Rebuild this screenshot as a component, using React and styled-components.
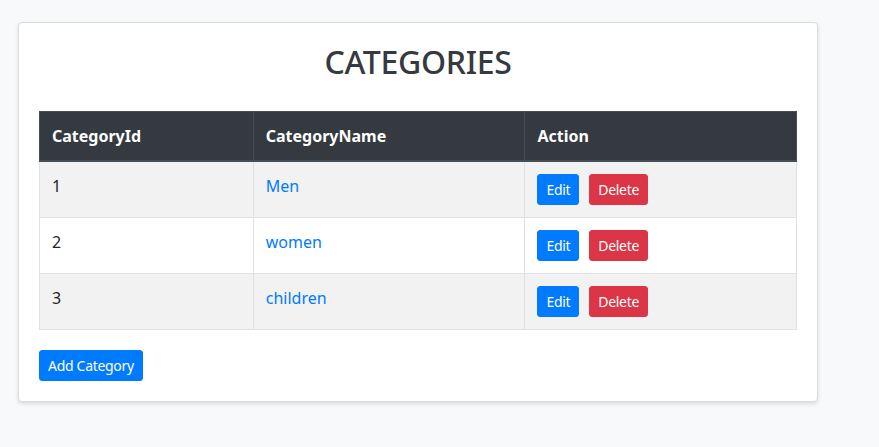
import styled, { createGlobalStyle } from "styled-components";

const GlobalStyle = createGlobalStyle`
  html, body {
    margin: 0;
    padding: 0;
    background-color: #f8f9fa;
    font-family: "Segoe UI", "Noto Sans", "Open Sans", sans-serif;
    color: #212529;
    font-size: 16px;
    line-height: 1.5;
  }
  * { box-sizing: border-box; }
`;

const Page = styled.div`
  min-height: 447px;
  padding: 22px 18px;
`;

const Card = styled.div`
  width: 800px;
  background-color: #fff;
  border: 1px solid #d9dde2;
  border-radius: 4px;
  box-shadow: 0 2px 4px rgba(0, 0, 0, 0.12);
  padding: 20px;
`;

const Title = styled.h2`
  margin: 0 0 30px;
  text-align: center;
  font-size: 32px;
  font-weight: 500;
  letter-spacing: -0.3px;
  line-height: 1.2;
  color: #343a40;
`;

const Table = styled.table`
  width: 100%;
  border-collapse: collapse;
`;

const HeadCell = styled.th`
  text-align: left;
  padding: 12px;
  font-weight: 700;
  color: #fff;
  background-color: #343a40;
  border: 1px solid #454d55;
  border-bottom-width: 2px;
  width: ${(p) => p.$w}px;
`;

const Row = styled.tr`
  background-color: ${(p) => (p.$striped ? "#f2f2f2" : "#fff")};
`;

const Cell = styled.td`
  padding: 12px;
  vertical-align: top;
  border: 1px solid #dee2e6;
`;

const NameLink = styled.a`
  color: #007bff;
  text-decoration: none;
`;

const Button = styled.button`
  font-family: inherit;
  font-size: 14px;
  letter-spacing: -0.3px;
  line-height: 1.5;
  padding: 4px 8px;
  border-radius: 3px;
  border: 1px solid ${(p) => (p.$danger ? "#dc3545" : "#007bff")};
  background-color: ${(p) => (p.$danger ? "#dc3545" : "#007bff")};
  color: #fff;
  cursor: pointer;
  & + & {
    margin-left: 10px;
  }
`;

const Footer = styled.div`
  margin-top: 20px;
`;

const categories = [
  { id: 1, name: "Men" },
  { id: 2, name: "women" },
  { id: 3, name: "children" },
];

const App = () => {
  return (
    <Page>
      <GlobalStyle />
      <Card>
        <Title>CATEGORIES</Title>
        <Table>
          <thead>
            <tr>
              <HeadCell $w={214}>CategoryId</HeadCell>
              <HeadCell $w={272}>CategoryName</HeadCell>
              <HeadCell $w={272}>Action</HeadCell>
            </tr>
          </thead>
          <tbody>
            {categories.map((c, i) => (
              <Row key={c.id} $striped={i % 2 === 0}>
                <Cell>{c.id}</Cell>
                <Cell>
                  <NameLink href="#">{c.name}</NameLink>
                </Cell>
                <Cell>
                  <Button>Edit</Button>
                  <Button $danger>Delete</Button>
                </Cell>
              </Row>
            ))}
          </tbody>
        </Table>
        <Footer>
          <Button>Add Category</Button>
        </Footer>
      </Card>
    </Page>
  );
};

export default App;
